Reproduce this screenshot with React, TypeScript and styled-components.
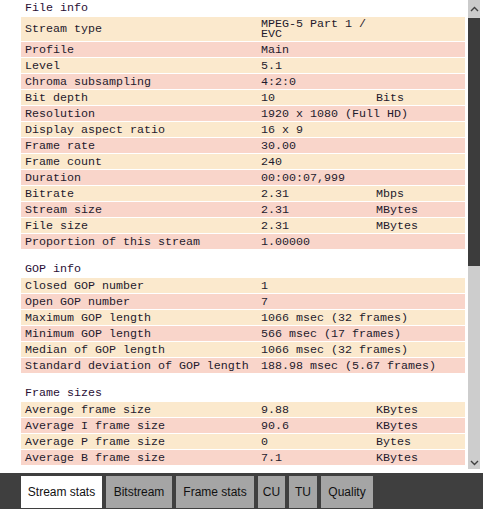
import React from 'react';
import styled, { createGlobalStyle } from 'styled-components';

const GlobalStyle = createGlobalStyle`
  html, body {
    margin: 0;
    padding: 0;
    background: #fff;
    overflow: hidden;
  }
`;

type Row = { label: string; value: string; unit?: string; wrap?: boolean };
type Section = { title: string; rows: Row[] };

const sections: Section[] = [
  {
    title: 'File info',
    rows: [
      { label: 'Stream type', value: 'MPEG-5 Part 1 / EVC', wrap: true },
      { label: 'Profile', value: 'Main' },
      { label: 'Level', value: '5.1' },
      { label: 'Chroma subsampling', value: '4:2:0' },
      { label: 'Bit depth', value: '10', unit: 'Bits' },
      { label: 'Resolution', value: '1920 x 1080 (Full HD)' },
      { label: 'Display aspect ratio', value: '16 x 9' },
      { label: 'Frame rate', value: '30.00' },
      { label: 'Frame count', value: '240' },
      { label: 'Duration', value: '00:00:07,999' },
      { label: 'Bitrate', value: '2.31', unit: 'Mbps' },
      { label: 'Stream size', value: '2.31', unit: 'MBytes' },
      { label: 'File size', value: '2.31', unit: 'MBytes' },
      { label: 'Proportion of this stream', value: '1.00000' },
    ],
  },
  {
    title: 'GOP info',
    rows: [
      { label: 'Closed GOP number', value: '1' },
      { label: 'Open GOP number', value: '7' },
      { label: 'Maximum GOP length', value: '1066 msec (32 frames)' },
      { label: 'Minimum GOP length', value: '566 msec (17 frames)' },
      { label: 'Median of GOP length', value: '1066 msec (32 frames)' },
      { label: 'Standard deviation of GOP length', value: '188.98 msec (5.67 frames)' },
    ],
  },
  {
    title: 'Frame sizes',
    rows: [
      { label: 'Average frame size', value: '9.88', unit: 'KBytes' },
      { label: 'Average I frame size', value: '90.6', unit: 'KBytes' },
      { label: 'Average P frame size', value: '0', unit: 'Bytes' },
      { label: 'Average B frame size', value: '7.1', unit: 'KBytes' },
    ],
  },
];

const tabs = [
  { name: 'Stream stats', width: 81, active: true },
  { name: 'Bitstream', width: 66 },
  { name: 'Frame stats', width: 78 },
  { name: 'CU', width: 27 },
  { name: 'TU', width: 28 },
  { name: 'Quality', width: 52 },
];

const Page = styled.div`
  display: flex;
  flex-direction: column;
  width: 483px;
  height: 509px;
  background: #fff;
`;

const Main = styled.div`
  flex: 1;
  min-height: 0;
  display: flex;
  margin-bottom: 4px;
`;

const Content = styled.div`
  flex: 1;
  min-width: 0;
  overflow: hidden;
  padding-left: 21px;
  font-family: 'Liberation Mono', 'DejaVu Sans Mono', monospace;
  font-size: 11.67px;
  color: #1e1a2c;
`;

const Block = styled.section`
  & + & {
    margin-top: 12px;
  }
`;

const Heading = styled.div`
  height: 16px;
  line-height: 16px;
  padding-left: 4px;
  color: #2a0f35;
`;

const Table = styled.div`
  display: flex;
  flex-direction: column;
  gap: 1px;
  margin-top: 1px;
`;

const TableRow = styled.div<{ $odd: boolean }>`
  display: grid;
  grid-template-columns: 236px 115px 1fr;
  min-height: 15px;
  background: ${(p) => (p.$odd ? '#f9d5ca' : '#fbe9cd')};
`;

const Cell = styled.div<{ $span?: boolean; $wrap?: boolean }>`
  display: flex;
  align-items: center;
  padding: 2px 4px;
  line-height: 10px;
  white-space: ${(p) => (p.$wrap ? 'normal' : 'nowrap')};
  grid-column: ${(p) => (p.$span ? 'span 2' : 'auto')};
  max-width: ${(p) => (p.$wrap ? '116px' : 'none')};
`;

const ScrollBar = styled.div`
  width: 12px;
  margin: 0 3px;
  display: flex;
  flex-direction: column;
  background: #cdcdcd;
`;

const ArrowButton = styled.div`
  height: 17px;
  display: flex;
  align-items: center;
  justify-content: center;
  background: #cbcbcb;
`;

const Thumb = styled.div`
  height: 248px;
  margin-top: 1px;
  background: #3c3c3c;
`;

const Track = styled.div`
  flex: 1;
  display: flex;
  align-items: flex-end;
  justify-content: center;
  padding-bottom: 3px;
`;

const TabBar = styled.div`
  height: 36px;
  box-sizing: border-box;
  padding: 3px 0 1px 21px;
  display: flex;
  gap: 4px;
  background: #3f3f3f;
`;

const Tab = styled.div<{ $active?: boolean; $w: number }>`
  width: ${(p) => p.$w}px;
  display: flex;
  align-items: center;
  justify-content: center;
  background: ${(p) => (p.$active ? '#ffffff' : '#a5a5a5')};
  color: #111;
  font-family: 'Liberation Sans', Arial, sans-serif;
  font-size: 12px;
  white-space: nowrap;
`;

const Chevron = ({ up }: { up?: boolean }) => (
  <svg width="9" height="6" viewBox="0 0 9 6">
    <path
      d={up ? 'M1 5 L4.5 1.5 L8 5' : 'M1 1 L4.5 4.5 L8 1'}
      fill="none"
      stroke="#404040"
      strokeWidth="1.4"
    />
  </svg>
);

export default function App() {
  return (
    <Page>
      <GlobalStyle />
      <Main>
        <Content>
          {sections.map((s) => (
            <Block key={s.title}>
              <Heading>{s.title}</Heading>
              <Table>
                {s.rows.map((r, i) => (
                  <TableRow key={r.label} $odd={i % 2 === 1}>
                    <Cell>{r.label}</Cell>
                    <Cell $span={!r.unit} $wrap={r.wrap}>
                      {r.value}
                    </Cell>
                    {r.unit && <Cell>{r.unit}</Cell>}
                  </TableRow>
                ))}
              </Table>
            </Block>
          ))}
        </Content>
        <ScrollBar>
          <ArrowButton>
            <Chevron up />
          </ArrowButton>
          <Thumb />
          <Track>
            <Chevron />
          </Track>
        </ScrollBar>
      </Main>
      <TabBar>
        {tabs.map((t) => (
          <Tab key={t.name} $active={t.active} $w={t.width}>
            {t.name}
          </Tab>
        ))}
      </TabBar>
    </Page>
  );
}
